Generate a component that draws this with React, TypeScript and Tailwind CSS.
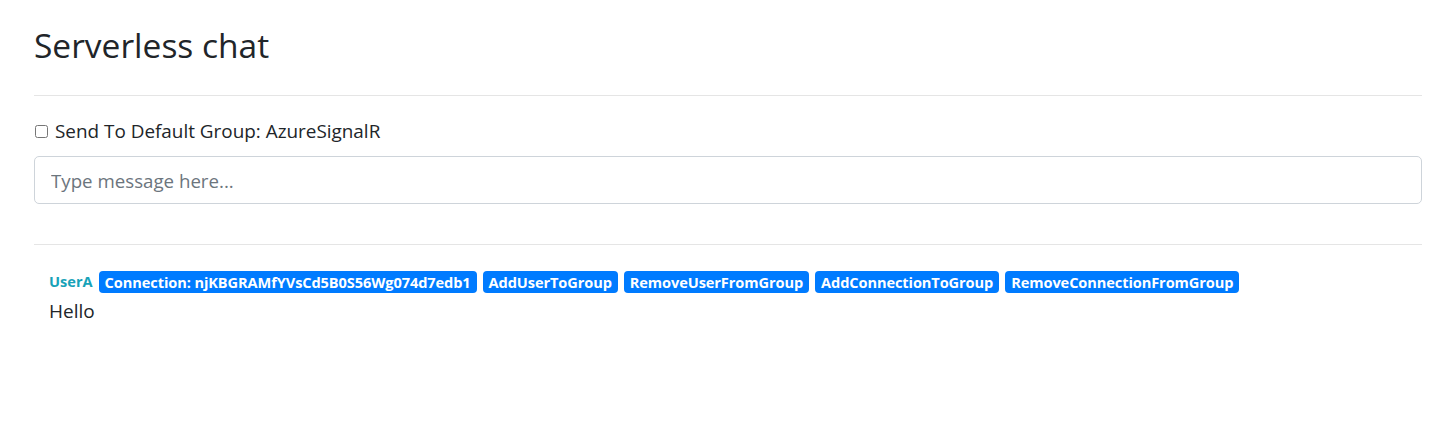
import * as React from "react";

const actions = [
  "AddUserToGroup",
  "RemoveUserFromGroup",
  "AddConnectionToGroup",
  "RemoveConnectionFromGroup",
];

function Badge({ children }: { children: React.ReactNode }) {
  return (
    <span className="inline-flex h-[22px] items-center rounded-[4px] bg-[#007bff] px-[6px] text-[14.6px] font-bold leading-none tracking-[-0.1px] text-white">
      {children}
    </span>
  );
}

export default function App() {
  const [toGroup, setToGroup] = React.useState(false);
  const [message, setMessage] = React.useState("");

  return (
    <div className="min-h-[430px] bg-white font-['Open_Sans','Noto_Sans',sans-serif] text-[#212529]">
      <div className="ml-[34px] mr-[25px]">
        <h2 className="pt-[25px] text-[33.5px] font-medium leading-[1.2]">Serverless chat</h2>

        <hr className="mt-[30px] border-t border-[#e5e5e5]" />

        <label className="mt-[23px] flex h-[24px] items-center gap-[7px] text-[18.9px]">
          <input
            type="checkbox"
            checked={toGroup}
            onChange={(e) => setToGroup(e.target.checked)}
            className="ml-[1px] h-[13px] w-[13px]"
          />
          Send To Default Group: AzureSignalR
        </label>

        <input
          value={message}
          onChange={(e) => setMessage(e.target.value)}
          placeholder="Type message here..."
          className="mt-[13px] block h-[48px] w-full rounded-[5px] border border-[#ced4da] px-[16px] text-[18.7px] placeholder:text-[#6c757d] focus:outline-none"
        />

        <hr className="mt-[40px] border-t border-[#e5e5e5]" />

        <div className="px-[15px] pt-[26px]">
          <div className="flex items-center gap-[6px]">
            <span className="text-[14.6px] font-bold text-[#17a2b8]">UserA</span>
            <Badge>Connection: njKBGRAMfYVsCd5B0S56Wg074d7edb1</Badge>
            {actions.map((a) => (
              <Badge key={a}>{a}</Badge>
            ))}
          </div>
          <div className="mt-[4px] text-[19px] leading-[1.5]">Hello</div>
        </div>
      </div>
    </div>
  );
}
